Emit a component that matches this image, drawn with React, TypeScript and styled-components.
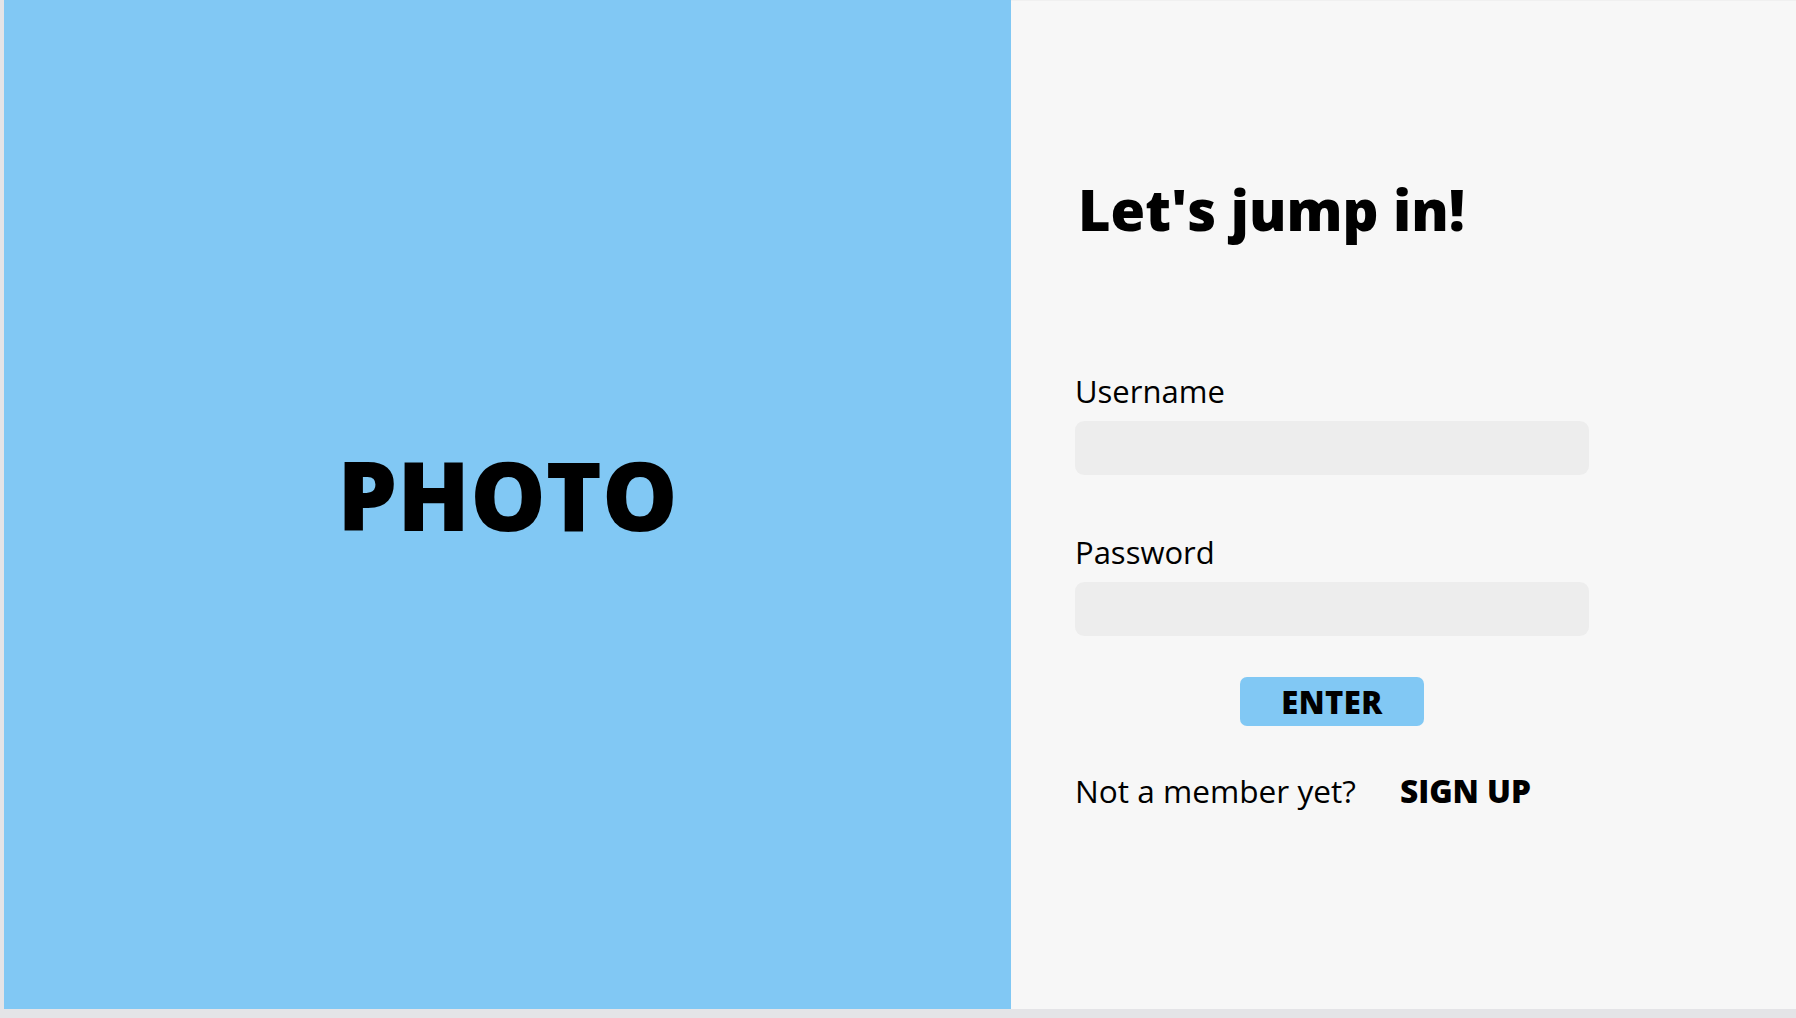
import styled, { createGlobalStyle } from 'styled-components';

const GlobalStyle = createGlobalStyle`
  html, body {
    margin: 0;
    padding: 0;
    background: #e4e4e7;
    font-family: 'Open Sans', 'Noto Sans', sans-serif;
  }
  * {
    box-sizing: border-box;
  }
`;

const Page = styled.main`
  display: grid;
  grid-template-columns: 1007px 1fr;
  height: 1009px;
  margin-left: 4px;
`;

const PhotoPanel = styled.section`
  background: #81c8f4;
  display: flex;
  align-items: center;
  justify-content: center;
  padding-bottom: 22px;
`;

const PhotoLabel = styled.span`
  font-size: 95px;
  font-weight: 800;
  color: #000;
`;

const FormPanel = styled.section`
  background: #f7f7f7;
  border-top: 1px solid #f0f0f0;
  padding: 170px 0 0 64px;
`;

const Form = styled.form`
  width: 514px;
  display: flex;
  flex-direction: column;
`;

const Heading = styled.h1`
  margin: 0 0 0 3px;
  font-size: 56px;
  font-weight: 800;
  line-height: normal;
  color: #000;
`;

const Label = styled.label<{ $gap: number }>`
  margin-top: ${p => p.$gap}px;
  font-size: 31px;
  font-weight: 400;
  color: #000;
  line-height: normal;
`;

const Input = styled.input`
  margin-top: 9px;
  height: 54px;
  width: 100%;
  border: none;
  border-radius: 9px;
  background: #ededed;
  padding: 0 16px;
  font-family: inherit;
  font-size: 24px;
  outline: none;
`;

const EnterButton = styled.button`
  align-self: center;
  margin-top: 41px;
  width: 184px;
  height: 49px;
  border: none;
  border-radius: 7px;
  background: #81c8f4;
  font-family: inherit;
  font-size: 31px;
  font-weight: 800;
  letter-spacing: 0.5px;
  color: #000;
  cursor: pointer;
  padding: 0;
`;

const SignUpRow = styled.p`
  margin: 43px 0 0;
  display: flex;
  align-items: baseline;
  gap: 44px;
  font-size: 31.6px;
  line-height: normal;
  color: #000;
`;

const SignUpLink = styled.a`
  font-weight: 800;
  color: #000;
  text-decoration: none;
  cursor: pointer;
`;

export default function App() {
  return (
    <>
      <GlobalStyle />
      <Page>
        <PhotoPanel>
          <PhotoLabel>PHOTO</PhotoLabel>
        </PhotoPanel>
        <FormPanel>
          <Form onSubmit={e => e.preventDefault()}>
            <Heading>Let's jump in!</Heading>
            <Label $gap={123} htmlFor="username">Username</Label>
            <Input id="username" type="text" />
            <Label $gap={56} htmlFor="password">Password</Label>
            <Input id="password" type="password" />
            <EnterButton type="submit">ENTER</EnterButton>
            <SignUpRow>
              Not a member yet?
              <SignUpLink href="#">SIGN UP</SignUpLink>
            </SignUpRow>
          </Form>
        </FormPanel>
      </Page>
    </>
  );
}
